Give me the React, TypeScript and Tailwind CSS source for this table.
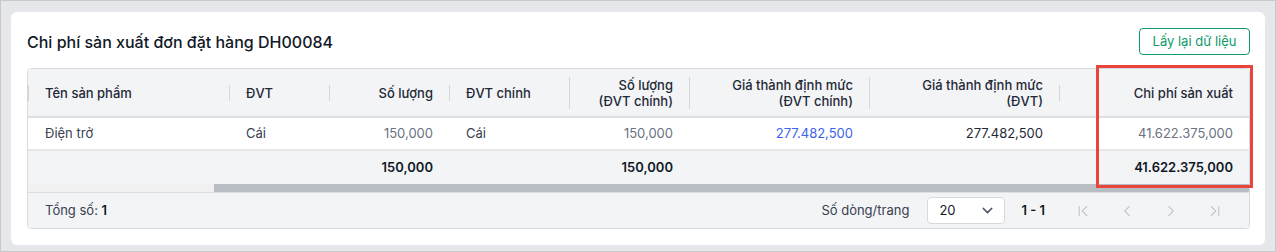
import { ChevronDown, ChevronFirst, ChevronLast, ChevronLeft, ChevronRight } from "lucide-react";

const cols = "grid grid-cols-[201px_100px_120px_120px_120px_180px_190px_1fr]";

type Head = { label: React.ReactNode; right?: boolean };

const heads: Head[] = [
  { label: "Tên sản phẩm" },
  { label: "ĐVT" },
  { label: "Số lượng", right: true },
  { label: "ĐVT chính" },
  { label: <>Số lượng<br />(ĐVT chính)</>, right: true },
  { label: <>Giá thành định mức<br />(ĐVT chính)</>, right: true },
  { label: <>Giá thành định mức<br />(ĐVT)</>, right: true },
  { label: "Chi phí sản xuất", right: true },
];

export default function App() {
  return (
    <div className="w-[1276px] h-[252px] border border-[#c8c9cb] bg-[#e5e7eb] pt-[11px] px-[10px] font-['Inter',sans-serif]">
      <div className="relative h-[233px] rounded-md bg-white pl-4 pr-[15px] pt-4">
        {/* title bar */}
        <div className="flex items-center justify-between h-[27px]">
          <h2 className="text-[16px] font-medium text-[#111827]">
            Chi phí sản xuất đơn đặt hàng DH00084
          </h2>
          <button className="h-[27px] w-[111px] rounded border border-[#0d9a6c] text-[13px] text-[#0d9a6c]">
            Lấy lại dữ liệu
          </button>
        </div>

        {/* table */}
        <div className="mt-[13px] rounded border border-[#d6d9dd] overflow-hidden text-[13px]">
          <div className={`${cols} h-[49px] items-center bg-[#f3f4f6] border-b-2 border-[#dcdfe3] font-medium text-[#1f2937]`}>
            {heads.map((h, i) => (
              <div
                key={i}
                className={`border-l border-[#d3d6da] px-4 leading-4 ${h.right ? "text-right" : ""}`}
              >
                {h.label}
              </div>
            ))}
          </div>

          <div className={`${cols} h-[33px] items-center bg-white border-b-2 border-[#e5e7eb]`}>
            <div className="pl-[17px] text-[#374151]">Điện trở</div>
            <div className="pl-[17px] text-[#374151]">Cái</div>
            <div className="pr-4 text-right text-[#6b7280]">150,000</div>
            <div className="pl-[17px] text-[#374151]">Cái</div>
            <div className="pr-4 text-right text-[#6b7280]">150,000</div>
            <div className="pr-4 text-right text-[#3b63ee]">277.482,500</div>
            <div className="pr-4 text-right text-[#1f2937]">277.482,500</div>
            <div className="pr-4 text-right text-[#6b7280]">41.622.375,000</div>
          </div>

          <div className={`${cols} h-[33px] items-center bg-[#f3f4f6] font-semibold text-[#111827]`}>
            <div />
            <div />
            <div className="pr-4 text-right">150,000</div>
            <div />
            <div className="pr-4 text-right">150,000</div>
            <div />
            <div />
            <div className="pr-4 text-right">41.622.375,000</div>
          </div>

          {/* horizontal scrollbar */}
          <div className="flex h-2 bg-[#f1f1f1]">
            <div className="w-[186px]" />
            <div className="flex-1 bg-[#b8bcc3]" />
          </div>

          {/* pagination */}
          <div className="flex h-[36px] items-center justify-between border-t border-[#dcdfe3] bg-[#f3f4f6] pl-[17px] pr-3 text-[#374151]">
            <div>
              Tổng số: <span className="font-semibold text-[#111827]">1</span>
            </div>
            <div className="flex items-center">
              <span className="mr-[18px]">Số dòng/trang</span>
              <div className="flex h-[27px] w-[78px] items-center justify-between rounded border border-[#d6d9dd] bg-white pl-[11px] pr-[8px] text-[#111827]">
                <span>20</span>
                <ChevronDown size={17} strokeWidth={2} className="text-[#4b5563]" />
              </div>
              <span className="ml-4 mr-4 font-semibold text-[#111827]">1 - 1</span>
              <div className="flex text-[#c3c7ce]">
                <span className="flex w-11 justify-center"><ChevronFirst size={18} strokeWidth={1.5} /></span>
                <span className="flex w-11 justify-center"><ChevronLeft size={18} strokeWidth={1.5} /></span>
                <span className="flex w-11 justify-center"><ChevronRight size={18} strokeWidth={1.5} /></span>
                <span className="flex w-11 justify-center"><ChevronLast size={18} strokeWidth={1.5} /></span>
              </div>
            </div>
          </div>
        </div>

        {/* highlight annotation */}
        <div className="absolute left-[1085px] top-[53px] h-[123px] w-[157px] border-[3px] border-[#e8453c]" />
      </div>
    </div>
  );
}
